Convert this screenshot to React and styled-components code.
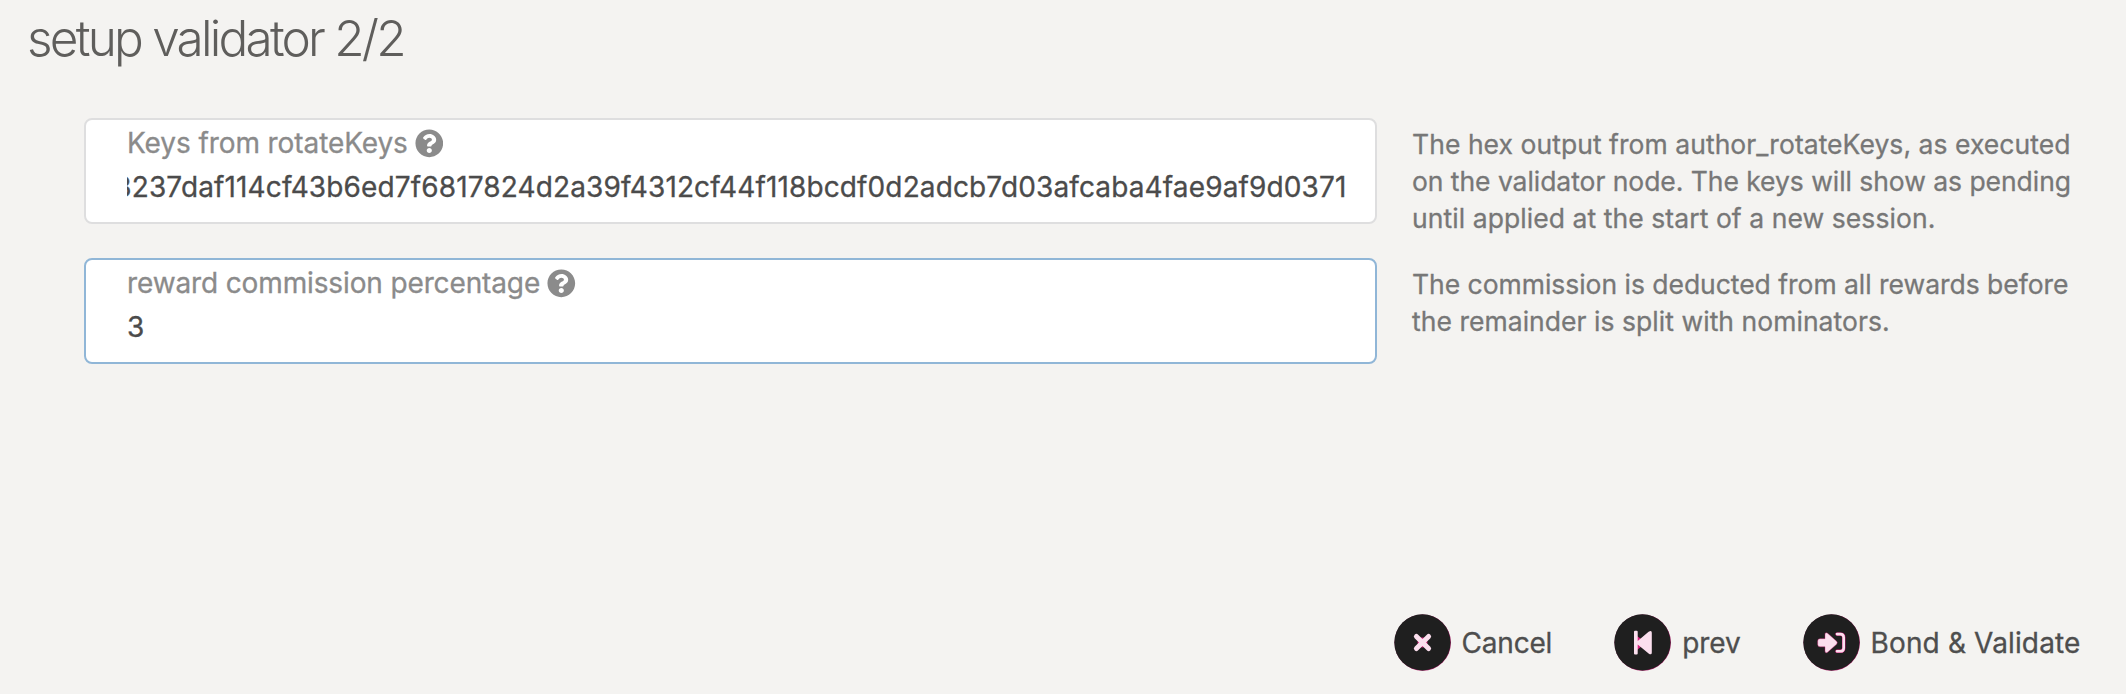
import React from 'react';
import styled, { createGlobalStyle } from 'styled-components';
import { FaQuestionCircle } from 'react-icons/fa';

const GlobalStyle = createGlobalStyle`
  body {
    margin: 0;
    background: #f4f3f1;
    font-family: Inter, 'Liberation Sans', sans-serif;
    color: #4e4e4e;
    -webkit-text-stroke: 0.3px currentColor;
  }
`;

const Modal = styled.main`
  box-sizing: border-box;
  height: 694px;
  display: flex;
  flex-direction: column;
  justify-content: space-between;
  padding: 8px 45.5px 23px 26px;
  overflow: hidden;
`;

const Title = styled.h1`
  margin: 0 0 50px;
  padding-left: 1px;
  font-size: 49.5px;
  font-weight: 300;
  line-height: 60px;
  letter-spacing: -2.78px;
  color: #5f5e5c;
  -webkit-text-stroke: 0;
`;

const Form = styled.div`
  display: flex;
  flex-direction: column;
  gap: 34px;
  padding-left: 58px;
`;

const FieldRow = styled.div`
  display: grid;
  grid-template-columns: 1292.5px 1fr;
  grid-template-rows: 106px;
  column-gap: 35.5px;
  height: 106px;
`;

const Field = styled.label`
  box-sizing: border-box;
  padding: 5px 28px 0 41px;
  border: 2px solid ${(p) => (p.$focused ? '#90b6d7' : '#dededf')};
  border-radius: 8px;
  background: #fff;
`;

const FieldLabel = styled.span`
  display: flex;
  align-items: center;
  gap: 7px;
  font-size: 28px;
  line-height: 37px;
  letter-spacing: ${(p) => p.$tracking}px;
  color: #8b8b8b;
`;

const HelpIcon = styled(FaQuestionCircle)`
  width: 28.6px;
  height: 28.6px;
`;

const Value = styled.span`
  display: flex;
  justify-content: ${(p) => (p.$scrolled ? 'flex-end' : 'flex-start')};
  overflow: hidden;
  font-size: 28px;
  line-height: 50px;
  letter-spacing: 0.13px;
  white-space: nowrap;
  color: #4b4b4b;
`;

const Help = styled.p`
  margin: 0;
  padding-top: 8px;
  font-size: 26.5px;
  line-height: 37px;
  color: #777;
`;

const HelpLine = styled.span`
  display: block;
  white-space: nowrap;
  letter-spacing: ${(p) => p.$tracking}px;
`;

const Actions = styled.footer`
  display: flex;
  justify-content: flex-end;
  gap: 62px;
`;

const Action = styled.button`
  display: flex;
  align-items: center;
  gap: 11px;
  padding: 0;
  border: 0;
  background: none;
  font: 400 28px/55px Inter, 'Liberation Sans', sans-serif;
  letter-spacing: ${(p) => p.$tracking}px;
  white-space: nowrap;
  color: #4e4e4e;
`;

const Caption = styled.span`
  padding-top: 2px;
`;

const Badge = styled.svg`
  display: block;
  flex: none;
  width: 57px;
  height: 57px;
`;

const pink = '#fbdfee';
const magenta = '#d8207f';

function Disc({ children }) {
  return (
    <Badge viewBox="0 0 57 57">
      <circle cx="28.7" cy="28.6" r="28.2" fill="#a81c66" />
      <circle cx="28.4" cy="28.4" r="28.1" fill="#1f1f1f" />
      {children}
    </Badge>
  );
}

const CloseIcon = () => (
  <Disc>
    <circle cx="28.5" cy="28.5" r="4.9" fill={magenta} />
    <path d="M22.4 22.4 34.6 34.6M34.6 22.4 22.4 34.6" stroke={pink} strokeWidth="5" strokeLinecap="round" />
  </Disc>
);

const PrevIcon = () => (
  <Disc>
    <path d="M23 22 28.5 26v5.5L23 36z" fill={magenta} />
    <path
      d="M20 17.7q0-1 1-1h1.7q1 0 1 1v9.2L34.6 17.8q3.2-2.1 3.2 1V38.4q0 3.1-3.2 1L23.7 30.4v9.2q0 1-1 1H21q-1 0-1-1z"
      fill={pink}
    />
  </Disc>
);

const SignInIcon = () => (
  <Disc>
    <path d="M34 20.1h3.3q3.4 0 3.4 3.4v10.4q0 3.4-3.4 3.4H34" fill="none" stroke={magenta} strokeWidth="3.4" strokeLinecap="round" />
    <path d="M34 20.1h3.3q3.4 0 3.4 3.4v10.4q0 3.4-3.4 3.4H34" fill="none" stroke={pink} strokeWidth="2.6" strokeLinecap="round" />
    <path
      d="M17 24.7h5v-4q0-3 2.6-1.4l9 8q1.4 1.4 0 2.9l-9 8q-2.6 1.6-2.6-1.4v-4H17q-2.3 0-2.3-2.3v-3.5q0-2.3 2.3-2.3z"
      fill={pink}
      stroke={magenta}
      strokeWidth="0.4"
    />
  </Disc>
);

export default function App() {
  return (
    <>
      <GlobalStyle />
      <Modal>
        <section>
          <Title>setup validator 2/2</Title>
          <Form>
            <FieldRow>
              <Field>
                <FieldLabel $tracking={-0.09}>
                  Keys from rotateKeys
                  <HelpIcon />
                </FieldLabel>
                <Value $scrolled>
                  3237daf114cf43b6ed7f6817824d2a39f4312cf44f118bcdf0d2adcb7d03afcaba4fae9af9d0371
                </Value>
              </Field>
              <Help>
                <HelpLine $tracking={0.05}>The hex output from author_rotateKeys, as executed</HelpLine>
                <HelpLine $tracking={-0.05}>on the validator node. The keys will show as pending</HelpLine>
                <HelpLine $tracking={0.07}>until applied at the start of a new session.</HelpLine>
              </Help>
            </FieldRow>
            <FieldRow>
              <Field $focused>
                <FieldLabel $tracking={-0.13}>
                  reward commission percentage
                  <HelpIcon />
                </FieldLabel>
                <Value>3</Value>
              </Field>
              <Help>
                <HelpLine $tracking={-0.03}>The commission is deducted from all rewards before</HelpLine>
                <HelpLine $tracking={0.04}>the remainder is split with nominators.</HelpLine>
              </Help>
            </FieldRow>
          </Form>
        </section>
        <Actions>
          <Action $tracking={-0.2}>
            <CloseIcon />
            <Caption>Cancel</Caption>
          </Action>
          <Action $tracking={-0.1}>
            <PrevIcon />
            <Caption>prev</Caption>
          </Action>
          <Action $tracking={0.14}>
            <SignInIcon />
            <Caption>Bond &amp; Validate</Caption>
          </Action>
        </Actions>
      </Modal>
    </>
  );
}
